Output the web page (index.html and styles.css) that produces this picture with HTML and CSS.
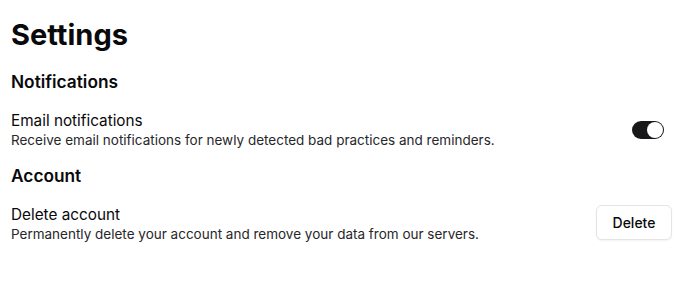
FILE: index.html
```html
<!DOCTYPE html>
<html lang="en">
<head>
  <meta charset="UTF-8">
  <title>Settings</title>
  <link rel="stylesheet" href="styles.css">
</head>
<body>
  <div class="page">
    <h1 class="title">Settings</h1>

    <h2 class="section">Notifications</h2>
    <div class="row">
      <div class="info">
        <div class="label">Email notifications</div>
        <div class="desc">Receive email notifications for newly detected bad practices and reminders.</div>
      </div>
      <button class="toggle on" aria-label="Email notifications"><span class="knob"></span></button>
    </div>

    <h2 class="section">Account</h2>
    <div class="row">
      <div class="info">
        <div class="label">Delete account</div>
        <div class="desc">Permanently delete your account and remove your data from our servers.</div>
      </div>
      <button class="btn">Delete</button>
    </div>
  </div>
</body>
</html>
```

FILE: styles.css
```css
body {
  margin: 0;
  background: #fff;
  color: #09090b;
  font-family: Inter, "Noto Sans", sans-serif;
}

.page {
  padding: 15px 24px 0 11px;
}

.title {
  margin: 0 0 14px;
  font-size: 29px;
  font-weight: 700;
  line-height: 40px;
}

.section {
  margin: 0 0 16px;
  font-size: 17.3px;
  font-weight: 600;
  line-height: 26px;
}

.row {
  display: flex;
  align-items: center;
  justify-content: space-between;
  margin-bottom: 14px;
}

.label {
  font-size: 15.3px;
  line-height: 20px;
}

.desc {
  font-size: 13.5px;
  line-height: 18px;
  color: #27272a;
}

.toggle {
  display: flex;
  align-items: center;
  justify-content: flex-end;
  width: 32px;
  height: 18px;
  padding: 0;
  margin-right: 8px;
  border: none;
  border-radius: 9px;
  background: #18181b;
  cursor: pointer;
}

.knob {
  width: 16px;
  height: 16px;
  margin-right: 1px;
  border-radius: 50%;
  background: #fff;
}

.btn {
  align-self: flex-start;
  width: 76px;
  height: 35px;
  border: 1px solid #e4e4e7;
  border-radius: 6px;
  background: #fff;
  box-shadow: 0 1px 2px rgba(0, 0, 0, 0.05);
  font-family: inherit;
  font-size: 14px;
  font-weight: 500;
  color: #09090b;
  cursor: pointer;
}
```
